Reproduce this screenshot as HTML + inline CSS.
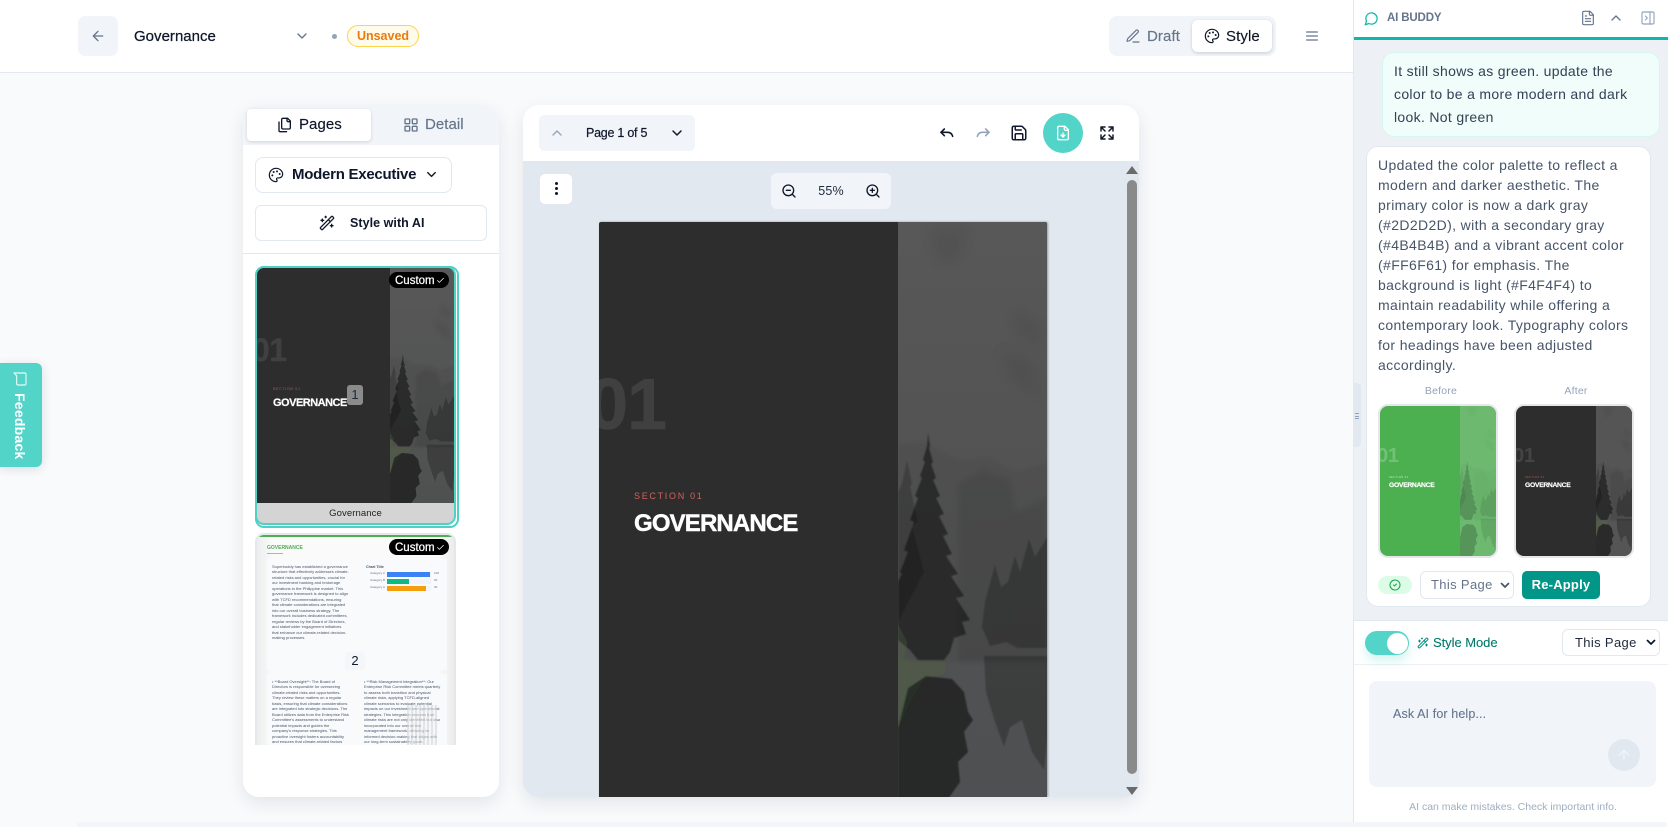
<!DOCTYPE html>
<html lang="en"><head><meta charset="utf-8"><title>Governance</title>
<style>
*{box-sizing:border-box;margin:0;padding:0}
html,body{width:1668px;height:827px;overflow:hidden;background:#f8fafc;font-family:"Liberation Sans",sans-serif;color:#0f172a}
.a{position:absolute;white-space:nowrap}
svg.i{position:absolute;fill:none;stroke:currentColor;stroke-width:2;stroke-linecap:round;stroke-linejoin:round;display:block}
.lines{white-space:nowrap}
.tiny{font-size:4px;line-height:5.47px;color:#475569;white-space:normal;overflow:hidden}
</style></head><body>
<svg width="0" height="0" style="position:absolute">
<defs>
<filter id="b8" x="-30%" y="-30%" width="160%" height="160%"><feGaussianBlur stdDeviation="7"/></filter>
<filter id="b3" x="-10%" y="-10%" width="120%" height="120%"><feGaussianBlur stdDeviation="2.5"/></filter>
<filter id="b1" x="-10%" y="-10%" width="120%" height="120%"><feGaussianBlur stdDeviation=".7"/></filter>
<symbol id="forest" viewBox="0 0 150 577" preserveAspectRatio="none">
<g filter="url(#b8)" fill="#000" style="opacity:calc(var(--o,1)*.06)"><path d="M30 5h40l-8 30-20 8ZM115 85l30 22-3 18-22-12ZM100 125l35 16 8 36-28-18Z"/></g>
<g filter="url(#b3)" fill="#000">
<path style="opacity:calc(var(--o,1)*.05)" d="M0 222 25 220 60 238 90 236 118 250 150 240V440H0Z"/>
<path style="opacity:calc(var(--o,1)*.07)" d="M60 262 85 248 112 258 118 290 150 275V440H60Z"/>
</g>
<g filter="url(#b1)">
<path fill="#000" style="opacity:calc(var(--o,1)*.24)" d="M97 343 103 365 110 360 117 334 122 350 131 317 137 335 150 314V426H120L108 420 92 424 84 405 87 380Z"/>
<path fill="#000" style="opacity:calc(var(--o,1)*.24)" d="M86 434H150V510L146 548 134 530 124 498 112 505 106 525 97 500 88 470Z"/>
<path fill="#000" style="opacity:calc(var(--o,1)*.2)" d="M9 238 14 262 12 264 20 300 14 304 26 350 0 400 0 270 4 262Z"/>
<path fill="#000" style="opacity:calc(var(--o,1)*.46)" d="M30 211 32 224 31 226 35 240 33 242 38 256 35 258 42 274 38 276 46 292 41 294 50 312 45 314 54 332 48 334 60 352 53 354 66 374 58 376 72 398 64 400 68 412 56 416 52 430 46 438 20 438 12 428 2 420 0 418 0 360 4 352 2 350 10 330 6 328 16 300 12 298 20 276 17 274 24 256 22 254 27 240 25 238 29 224Z"/>
<path fill="#4f6a3c" style="opacity:var(--g,.3)" d="M0 403 9 420 6 436 22 440 48 440 46 452 26 456 12 480 0 506Z"/>
<path fill="#000" style="opacity:calc(var(--o,1)*.5)" d="M10 466 28 454 54 457 66 470 70 490 75 498 66 510 70 530 60 540 62 560 50 577H0V506Z"/>
</g>
</symbol>
</defs></svg>

<!-- header -->
<div class="a" style="left:0;top:0;width:1353px;height:73px;background:#fff;border-bottom:1px solid #e2e8f0"></div>
<div class="a" style="left:78px;top:16px;width:40px;height:40px;background:#f1f5f9;border-radius:7px"></div>
<svg class="i" style="left:90px;top:28px;color:#64748b" width="16" height="16" viewBox="0 0 24 24"><path d="M19 12H5M12 19l-7-7 7-7"/></svg>
<div class="a" style="left:134px;top:26px;font-size:15px;line-height:21px;font-weight:500;letter-spacing:.02px;-webkit-text-stroke:.25px #0f172a">Governance</div>
<svg class="i" style="left:294px;top:28px;color:#64748b" width="16" height="16" viewBox="0 0 24 24"><path d="m6 9 6 6 6-6"/></svg>
<div class="a" style="left:332px;top:34px;width:5px;height:5px;border-radius:50%;background:#94a3b8"></div>
<div class="a" style="left:347px;top:25px;width:72px;height:22px;border:1px solid #fcd34d;background:#fffbeb;border-radius:11px;text-align:center;font-size:12.5px;line-height:20px;font-weight:700;color:#ea7a0c">Unsaved</div>

<div class="a" style="left:1109px;top:16px;width:167px;height:40px;background:#f1f5f9;border-radius:8px"></div>
<div class="a" style="left:1192px;top:20px;width:80px;height:32px;background:#fff;border-radius:6px;box-shadow:0 1px 3px rgba(15,23,42,.18)"></div>
<svg class="i" style="left:1125px;top:28px;color:#64748b;stroke-width:1.7" width="16" height="16" viewBox="0 0 24 24"><path d="M12 21h9"/><path d="M16.376 3.622a1 1 0 0 1 3.002 3.002L7.368 18.635a2 2 0 0 1-.855.506l-2.872.838a.5.5 0 0 1-.62-.62l.838-2.872a2 2 0 0 1 .506-.854z"/></svg>
<div class="a" style="left:1147px;top:26px;font-size:15px;line-height:21px;color:#64748b;letter-spacing:.1px;-webkit-text-stroke:.15px #64748b">Draft</div>
<svg class="i" style="left:1204px;top:28px;color:#0f172a;stroke-width:1.8" width="16" height="16" viewBox="0 0 24 24"><circle cx="13.5" cy="6.5" r=".6" fill="currentColor"/><circle cx="17.5" cy="10.5" r=".6" fill="currentColor"/><circle cx="8.5" cy="7.5" r=".6" fill="currentColor"/><circle cx="6.5" cy="12.5" r=".6" fill="currentColor"/><path d="M12 2C6.5 2 2 6.5 2 12s4.5 10 10 10c.926 0 1.648-.746 1.648-1.688 0-.437-.18-.835-.437-1.125-.29-.289-.438-.652-.438-1.125a1.64 1.64 0 0 1 1.668-1.668h1.996c3.051 0 5.555-2.503 5.555-5.554C21.965 6.012 17.461 2 12 2z"/></svg>
<div class="a" style="left:1226px;top:26px;font-size:15px;line-height:21px;letter-spacing:.1px;-webkit-text-stroke:.15px #0f172a">Style</div>
<svg class="i" style="left:1304px;top:28px;color:#64748b" width="16" height="16" viewBox="0 0 24 24"><path d="M4 6h16M4 12h16M4 18h16"/></svg>

<!-- bottom strip -->
<div class="a" style="left:77px;top:822px;width:1589px;height:5px;background:#f3f5f9"></div>

<!-- feedback -->
<div class="a" style="left:0;top:363px;width:42px;height:104px;background:#53d4c9;border-radius:0 6px 6px 0;box-shadow:0 2px 10px rgba(15,23,42,.12)"></div>
<svg class="i" style="left:12px;top:371px;color:#e6faf7;stroke-width:1.7;transform:rotate(90deg)" width="16" height="16" viewBox="0 0 24 24"><path d="M21 15a2 2 0 0 1-2 2H7l-4 4V5a2 2 0 0 1 2-2h14a2 2 0 0 1 2 2z"/></svg>
<div class="a" style="left:11px;top:393px;color:#fff;font-size:14px;font-weight:700;line-height:18px;writing-mode:vertical-rl;letter-spacing:.25px">Feedback</div>

<!-- left panel -->
<div class="a" style="left:243px;top:105px;width:256px;height:692px;background:#fff;border-radius:16px;box-shadow:0 6px 18px rgba(15,23,42,.09);overflow:hidden">
  <div class="a" style="left:0;top:0;width:256px;height:40px;background:#f1f5f9"></div>
</div>
<div class="a" style="left:247px;top:109px;width:124px;height:32px;background:#fff;border-radius:4px;box-shadow:0 1px 3px rgba(15,23,42,.15)"></div>
<svg class="i" style="left:277px;top:117px;stroke-width:2" width="16" height="16" viewBox="0 0 24 24"><path d="M20 7h-3a2 2 0 0 1-2-2V2"/><path d="M9 18a2 2 0 0 1-2-2V4a2 2 0 0 1 2-2h7l4 4v10a2 2 0 0 1-2 2Z"/><path d="M3 7.6v12.8A1.6 1.6 0 0 0 4.6 22h9.8"/></svg>
<div class="a" style="left:299px;top:115px;font-size:15px;line-height:20px;letter-spacing:.05px;-webkit-text-stroke:.15px #0f172a">Pages</div>
<svg class="i" style="left:403px;top:117px;color:#64748b" width="16" height="16" viewBox="0 0 24 24"><rect x="3" y="3" width="7" height="7" rx="1"/><rect x="14" y="3" width="7" height="7" rx="1"/><rect x="14" y="14" width="7" height="7" rx="1"/><rect x="3" y="14" width="7" height="7" rx="1"/></svg>
<div class="a" style="left:425px;top:115px;font-size:15px;line-height:20px;color:#64748b;letter-spacing:.05px;-webkit-text-stroke:.15px #64748b">Detail</div>

<div class="a" style="left:255px;top:157px;width:197px;height:36px;border:1px solid #e2e8f0;border-radius:8px;background:#fff"></div>
<svg class="i" style="left:268px;top:167px;stroke-width:1.8" width="16" height="16" viewBox="0 0 24 24"><circle cx="13.5" cy="6.5" r=".6" fill="currentColor"/><circle cx="17.5" cy="10.5" r=".6" fill="currentColor"/><circle cx="8.5" cy="7.5" r=".6" fill="currentColor"/><circle cx="6.5" cy="12.5" r=".6" fill="currentColor"/><path d="M12 2C6.5 2 2 6.5 2 12s4.5 10 10 10c.926 0 1.648-.746 1.648-1.688 0-.437-.18-.835-.437-1.125-.29-.289-.438-.652-.438-1.125a1.64 1.64 0 0 1 1.668-1.668h1.996c3.051 0 5.555-2.503 5.555-5.554C21.965 6.012 17.461 2 12 2z"/></svg>
<div class="a" style="left:292px;top:165px;font-size:15px;line-height:20px;font-weight:700;letter-spacing:-.26px">Modern Executive</div>
<svg class="i" style="left:424px;top:167px;stroke-width:2.2" width="15" height="15" viewBox="0 0 24 24"><path d="m6 9 6 6 6-6"/></svg>

<div class="a" style="left:255px;top:205px;width:232px;height:36px;border:1px solid #e2e8f0;border-radius:6px;background:#fff"></div>
<svg class="i" style="left:319px;top:215px" width="16" height="16" viewBox="0 0 24 24"><path d="m21.64 3.64-1.28-1.28a1.21 1.21 0 0 0-1.72 0L2.36 18.64a1.21 1.21 0 0 0 0 1.72l1.28 1.28a1.2 1.2 0 0 0 1.72 0L21.64 5.36a1.2 1.2 0 0 0 0-1.72"/><path d="m14 7 3 3M5 6v4M19 14v4M10 2v2M7 8H3M21 16h-4M11 3H9"/></svg>
<div class="a" style="left:350px;top:214px;font-size:12.5px;line-height:18px;font-weight:700;letter-spacing:.05px">Style with AI</div>
<div class="a" style="left:243px;top:253px;width:256px;height:1px;background:#e2e8f0"></div>

<!-- thumb 1 -->
<div class="a" style="left:255px;top:266px;width:204px;height:262px;border:2px solid #4fd1c5;border-radius:9px"></div>
<div class="a" style="left:255px;top:266px;width:201px;height:259px;border:2px solid #4fd1c5;border-radius:9px;background:#d4d4d4;overflow:hidden">
  <div class="a" style="left:0;top:0;width:197px;height:235px;background:#2d2d2d;overflow:hidden">
    <div class="a" style="left:133px;top:0;width:64px;height:235px;background:linear-gradient(#585858,#4f5050)"><svg width="64" height="235" style="display:block"><use href="#forest" width="64" height="235"/></svg></div>
    <div class="a" style="left:-5px;top:65px;font-size:32px;line-height:34px;font-weight:700;color:#404040;letter-spacing:-.5px;-webkit-text-stroke:.4px #404040">01</div>
    <div class="a" style="left:16px;top:119px;font-size:3.4px;line-height:5px;color:#c55a50;letter-spacing:.8px">SECTION 01</div>
    <div class="a" style="left:16px;top:128px;font-size:11px;line-height:14px;font-weight:700;color:#fff;letter-spacing:-.5px;-webkit-text-stroke:.2px #fff">GOVERNANCE</div>
  </div>
  <div class="a" style="left:0;top:235px;width:197px;height:20px;text-align:center;font-size:9.5px;line-height:21px;color:#222;letter-spacing:.1px">Governance</div>
</div>
<div class="a" style="left:347px;top:385px;width:16px;height:20px;background:#8b8b8b;border-radius:3px;text-align:center;font-size:13px;line-height:20px;color:#1e293b">1</div>
<div class="a" style="left:389px;top:272px;width:60px;height:16px;background:#000;border-radius:8px;color:#fff;font-size:11.5px;line-height:18px;padding-left:6px;font-weight:500;-webkit-text-stroke:.25px #fff">Custom</div>
<svg class="i" style="left:436px;top:276px;color:#fff;stroke-width:2" width="9" height="9" viewBox="0 0 24 24"><path d="M20 6 9 17l-5-5"/></svg>

<!-- thumb 2 -->
<div class="a" style="left:255px;top:533px;width:201px;height:212px;border:2px solid #e5e7eb;border-bottom:0;border-radius:9px 9px 0 0;background:linear-gradient(90deg,#eceded,#fafafa 8%,#fafafa 92%,#ececec);overflow:hidden">
  <div class="a" style="left:0;top:0;width:197px;height:2px;background:#4caf50"></div>
  <div class="a" style="left:10px;top:10px;font-size:5px;line-height:7px;font-weight:700;color:#4caf50">GOVERNANCE</div>
  <div class="a" style="left:10px;top:18px;width:16px;height:1px;background:#86d18a"></div>
  <div class="a tiny" style="left:10px;top:24px;width:87px;height:111px;background:#f8fafc;border-radius:2px;padding:5px 5px">Superbuddy has established a governance structure that effectively addresses climate-related risks and opportunities, crucial for our investment banking and brokerage operations in the Philippine market. This governance framework is designed to align with TCFD recommendations, ensuring that climate considerations are integrated into our overall business strategy. The framework includes dedicated committees, regular reviews by the Board of Directors, and stakeholder engagement initiatives that enhance our climate-related decision-making processes.</div>
  <div class="a" style="left:102px;top:24px;width:88px;height:111px;background:#f8fafc;border-radius:2px">
    <div class="a" style="left:7px;top:6px;font-size:3.6px;line-height:5px;font-weight:700;color:#475569">Chart Title</div>
    <div class="a" style="left:11px;top:12px;font-size:3px;line-height:5px;color:#64748b">Category A</div>
    <div class="a" style="left:11px;top:19px;font-size:3px;line-height:5px;color:#64748b">Category B</div>
    <div class="a" style="left:11px;top:26px;font-size:3px;line-height:5px;color:#64748b">Category C</div>
    <div class="a" style="left:28px;top:12.500px;width:44px;height:5px;background:#f1f5f9"></div>
    <div class="a" style="left:28px;top:19.500px;width:44px;height:5px;background:#f1f5f9"></div>
    <div class="a" style="left:28px;top:26.500px;width:44px;height:5px;background:#f1f5f9"></div>
    <div class="a" style="left:28px;top:12.500px;width:43px;height:5px;background:#3b82f6"></div>
    <div class="a" style="left:28px;top:19.500px;width:22px;height:5px;background:#10b981"></div>
    <div class="a" style="left:28px;top:26.500px;width:39px;height:5px;background:#f59e0b"></div>
    <div class="a" style="left:75px;top:12px;font-size:3px;line-height:5px;color:#64748b">100</div>
    <div class="a" style="left:75px;top:19px;font-size:3px;line-height:5px;color:#64748b">50</div>
    <div class="a" style="left:75px;top:26px;font-size:3px;line-height:5px;color:#64748b">90</div>
  </div>
  <div class="a tiny" style="left:10px;top:139px;width:87px;height:80px;background:#f8fafc;border-radius:2px;padding:5px 5px">• **Board Oversight**: The Board of Directors is responsible for overseeing climate-related risks and opportunities. They review these matters on a regular basis, ensuring that climate considerations are integrated into strategic decisions. The Board utilizes data from the Enterprise Risk Committee's assessments to understand potential impacts and guides the company's response strategies. This proactive oversight fosters accountability and ensures that climate-related factors are considered in all major business initiatives.</div>
  <div class="a tiny" style="left:102px;top:139px;width:88px;height:80px;background:#f8fafc;border-radius:2px;padding:5px 5px">• **Risk Management Integration**: Our Enterprise Risk Committee meets quarterly to assess both transition and physical climate risks, applying TCFD-aligned climate scenarios to evaluate potential impacts on our investment and operational strategies. This integration ensures that climate risks are not only identified but also incorporated into our overall risk management framework, allowing for informed decision-making that aligns with our long-term sustainability goals.</div>
  <div class="a" style="left:150px;top:170px;width:30px;height:42px;opacity:.55;background:repeating-linear-gradient(90deg,#cfd3d3 0 2px,#f2f3f3 2px 4px)"></div>
</div>
<div class="a" style="left:345px;top:652px;width:20px;height:18px;background:#f4f6f9;border-radius:3px;text-align:center;font-size:13px;line-height:18px;color:#0f172a">2</div>
<div class="a" style="left:389px;top:539px;width:60px;height:16px;background:#000;border-radius:8px;color:#fff;font-size:11.5px;line-height:18px;padding-left:6px;font-weight:500;-webkit-text-stroke:.25px #fff">Custom</div>
<svg class="i" style="left:436px;top:543px;color:#fff;stroke-width:2" width="9" height="9" viewBox="0 0 24 24"><path d="M20 6 9 17l-5-5"/></svg>

<!-- doc panel -->
<div class="a" style="left:523px;top:105px;width:616px;height:692px;background:#e2e8f0;border-radius:16px;box-shadow:0 6px 18px rgba(15,23,42,.09);overflow:hidden">
  <div class="a" style="left:0;top:0;width:616px;height:56px;background:#fff"></div>
  <!-- page -->
  <div class="a" style="left:76px;top:117px;width:448px;height:575px;background:#2d2d2d;box-shadow:1px 0 2px rgba(0,0,0,.35);overflow:hidden;border-radius:2px 2px 0 0">
    <div class="a" style="left:299px;top:0;width:150px;height:577px;background:linear-gradient(#585858 0,#535353 42%,#4e5051 100%)"><svg width="150" height="577" style="display:block"><use href="#forest" width="150" height="577"/></svg></div>
    <div class="a" style="left:-11px;top:143px;font-size:72px;line-height:80px;font-weight:700;color:#404040;letter-spacing:-1px;-webkit-text-stroke:.6px #404040">01</div>
    <div class="a" style="left:35px;top:268px;font-size:9px;line-height:12px;color:#d5605a;letter-spacing:1.7px">SECTION 01</div>
    <div class="a" style="left:35px;top:287px;font-size:24px;line-height:30px;font-weight:700;color:#fff;letter-spacing:-.85px;-webkit-text-stroke:.4px #fff">GOVERNANCE</div>
  </div>
</div>
<div class="a" style="left:539px;top:115px;width:156px;height:36px;background:#f1f5f9;border-radius:6px"></div>
<svg class="i" style="left:549px;top:125px;color:#94a3b8" width="16" height="16" viewBox="0 0 24 24"><path d="m18 15-6-6-6 6"/></svg>
<div class="a" style="left:586px;top:124px;font-size:12.5px;line-height:18px;font-weight:500;letter-spacing:-.25px;-webkit-text-stroke:.2px #0f172a">Page 1 of 5</div>
<svg class="i" style="left:669px;top:125px;stroke-width:2.2" width="16" height="16" viewBox="0 0 24 24"><path d="m6 9 6 6 6-6"/></svg>
<svg class="i" style="left:939px;top:125px;stroke-width:2.4" width="16" height="16" viewBox="0 0 24 24"><path d="M8 6 3 11l5 5"/><path d="M3 11h10c4 0 6.500 2.500 7.500 6"/></svg>
<svg class="i" style="left:975px;top:125px;color:#94a3b8;stroke-width:2.4" width="16" height="16" viewBox="0 0 24 24"><path d="m16 6 5 5-5 5"/><path d="M21 11H11c-4 0-6.500 2.500-7.500 6"/></svg>
<svg class="i" style="left:1010px;top:124px" width="18" height="18" viewBox="0 0 24 24"><path d="M15.2 3a2 2 0 0 1 1.4.6l3.8 3.8a2 2 0 0 1 .6 1.4V19a2 2 0 0 1-2 2H5a2 2 0 0 1-2-2V5a2 2 0 0 1 2-2z"/><path d="M17 21v-7a1 1 0 0 0-1-1H8a1 1 0 0 0-1 1v7"/><path d="M7 3v4a1 1 0 0 0 1 1h7"/></svg>
<div class="a" style="left:1043px;top:113px;width:40px;height:40px;border-radius:50%;background:#53d4c9"></div>
<svg class="i" style="left:1055px;top:125px;color:#fff" width="16" height="16" viewBox="0 0 24 24"><path d="M15 2H6a2 2 0 0 0-2 2v16a2 2 0 0 0 2 2h12a2 2 0 0 0 2-2V7Z"/><path d="M14 2v4a2 2 0 0 0 2 2h4"/><path d="M12 18v-6"/><path d="m9 15 3 3 3-3"/></svg>
<svg class="i" style="left:1099px;top:125px;stroke-width:2.200" width="16" height="16" viewBox="0 0 24 24"><path d="M3 9V3h6M3 3l6 6M21 9V3h-6M21 3l-6 6M3 15v6h6M3 21l6-6M21 15v6h-6M21 21l-6-6"/></svg>

<div class="a" style="left:540px;top:174px;width:32px;height:30px;background:#fff;border-radius:5px"></div>
<div class="a" style="left:554.500px;top:182px;width:3px;height:3px;border-radius:50%;background:#0f172a;box-shadow:0 5px 0 #0f172a,0 10px 0 #0f172a"></div>
<div class="a" style="left:771px;top:173px;width:120px;height:36px;background:#f1f5f9;border-radius:6px"></div>
<svg class="i" style="left:781px;top:183px" width="16" height="16" viewBox="0 0 24 24"><circle cx="11" cy="11" r="8"/><path d="m21 21-4.300-4.300M8 11h6"/></svg>
<div class="a" style="left:771px;top:182px;width:120px;text-align:center;font-size:12.5px;line-height:18px;color:#1e293b;letter-spacing:.2px">55%</div>
<svg class="i" style="left:865px;top:183px" width="16" height="16" viewBox="0 0 24 24"><circle cx="11" cy="11" r="8"/><path d="m21 21-4.300-4.300M8 11h6M11 8v6"/></svg>

<!-- scrollbar -->
<div class="a" style="left:1126px;top:166px;width:0;height:0;border-left:6px solid transparent;border-right:6px solid transparent;border-bottom:8px solid #6b6b6b"></div>
<div class="a" style="left:1127px;top:180px;width:10px;height:594px;background:#8a8a8a;border-radius:5px"></div>
<div class="a" style="left:1126px;top:787px;width:0;height:0;border-left:6px solid transparent;border-right:6px solid transparent;border-top:8px solid #6b6b6b"></div>

<!-- right panel -->
<div class="a" style="left:1353px;top:0;width:315px;height:822px;background:#fff;border-left:1px solid #e2e8f0"></div>
<div class="a" style="left:1354px;top:40px;width:314px;height:580px;background:#edf1f5"></div>
<div class="a" style="left:1354px;top:37px;width:314px;height:3px;background:#0db8a8"></div>
<svg class="i" style="left:1364px;top:11px;color:#0db8a8" width="15" height="15" viewBox="0 0 24 24"><path d="M7.900 20A9 9 0 1 0 4 16.100L2 22Z"/></svg>
<div class="a" style="left:1387px;top:11px;font-size:11.5px;line-height:15px;font-weight:700;color:#64748b;letter-spacing:-.15px">AI BUDDY</div>
<svg class="i" style="left:1580px;top:10px;color:#64748b;stroke-width:1.700" width="16" height="16" viewBox="0 0 24 24"><path d="M15 2H6a2 2 0 0 0-2 2v16a2 2 0 0 0 2 2h12a2 2 0 0 0 2-2V7Z"/><path d="M14 2v4a2 2 0 0 0 2 2h4M16 13H8M16 17H8M10 9H8"/></svg>
<svg class="i" style="left:1608px;top:10px;color:#64748b" width="16" height="16" viewBox="0 0 24 24"><path d="m18 15-6-6-6 6"/></svg>
<svg class="i" style="left:1640px;top:10px;color:#94a3b8;stroke-width:1.700" width="16" height="16" viewBox="0 0 24 24"><rect x="3" y="3" width="18" height="18" rx="2"/><path d="M15 3v18M8 9l3 3-3 3"/></svg>

<div class="a" style="left:1382px;top:52px;width:278px;height:85px;background:#f0fdfa;border:1px solid #d5f7f0;border-radius:12px"></div>
<div class="a lines" style="left:1394px;top:60px;font-size:14px;line-height:23px;color:#334155;letter-spacing:.32px">It still shows as green. update the<br>color to be a more modern and dark<br>look. Not green</div>

<div class="a" style="left:1366px;top:146px;width:285px;height:461px;background:#fff;border:1px solid #e2e8f0;border-radius:12px"></div>
<div class="a lines" style="left:1378px;top:155px;font-size:14px;line-height:20px;color:#475569;letter-spacing:.37px">Updated the color palette to reflect a<br>modern and darker aesthetic. The<br>primary color is now a dark gray<br>(#2D2D2D), with a secondary gray<br>(#4B4B4B) and a vibrant accent color<br>(#FF6F61) for emphasis. The<br>background is light (#F4F4F4) to<br>maintain readability while offering a<br>contemporary look. Typography colors<br>for headings have been adjusted<br>accordingly.</div>

<div class="a" style="left:1378px;top:384px;width:120px;text-align:center;font-size:10.500px;line-height:14px;color:#94a3b8;padding-left:6px;letter-spacing:.2px">Before</div>
<div class="a" style="left:1514px;top:384px;width:120px;text-align:center;font-size:10.500px;line-height:14px;color:#94a3b8;padding-left:4px;letter-spacing:.2px">After</div>

<div class="a" style="left:1378px;top:404px;width:120px;height:154px;border:2px solid #e5e7eb;border-radius:10px;background:#4caf50;overflow:hidden;--o:.4;--g:0">
  <div class="a" style="left:80px;top:0;width:36px;height:150px;background:#6cb96f"><svg width="36" height="150" style="display:block"><use href="#forest" width="36" height="150"/></svg></div>
  <div class="a" style="left:-3px;top:39px;font-size:20px;line-height:22px;font-weight:700;color:#72c275;letter-spacing:-.3px">01</div>
  <div class="a" style="left:9px;top:70px;font-size:2.500px;line-height:4px;color:#c8e8ca;letter-spacing:.5px">SECTION 01</div>
  <div class="a" style="left:9px;top:75px;font-size:6.800px;line-height:9px;font-weight:700;color:#fff;letter-spacing:-.33px;-webkit-text-stroke:.15px #fff">GOVERNANCE</div>
</div>
<div class="a" style="left:1514px;top:404px;width:120px;height:154px;border:2px solid #e5e7eb;border-radius:10px;background:#2d2d2d;overflow:hidden">
  <div class="a" style="left:80px;top:0;width:36px;height:150px;background:#555"><svg width="36" height="150" style="display:block"><use href="#forest" width="36" height="150"/></svg></div>
  <div class="a" style="left:-3px;top:39px;font-size:20px;line-height:22px;font-weight:700;color:#444;letter-spacing:-.3px">01</div>
  <div class="a" style="left:9px;top:70px;font-size:2.500px;line-height:4px;color:#c55a50;letter-spacing:.5px">SECTION 01</div>
  <div class="a" style="left:9px;top:75px;font-size:6.800px;line-height:9px;font-weight:700;color:#fff;letter-spacing:-.33px;-webkit-text-stroke:.15px #fff">GOVERNANCE</div>
</div>

<div class="a" style="left:1378px;top:576px;width:34px;height:18px;background:#dcfce7;border-radius:9px"></div>
<svg class="i" style="left:1389px;top:579px;color:#16a34a" width="12" height="12" viewBox="0 0 24 24"><circle cx="12" cy="12" r="10"/><path d="m9 12 2 2 4-4"/></svg>
<div class="a" style="left:1420px;top:571px;width:94px;height:28px;background:#fff;border:1px solid #e2e8f0;border-radius:6px"></div>
<div class="a" style="left:1431px;top:576px;font-size:13px;line-height:18px;color:#64748b;letter-spacing:.35px">This Page</div>
<svg class="i" style="left:1499px;top:579px;color:#475569;stroke-width:3.500" width="12" height="12" viewBox="0 0 24 24"><path d="m5 9 7 7 7-7"/></svg>
<div class="a" style="left:1522px;top:571px;width:78px;height:28px;background:#009688;border-radius:5px;color:#fff;text-align:center;font-size:13px;line-height:28px;font-weight:700;letter-spacing:.2px">Re-Apply</div>

<!-- style mode row -->
<div class="a" style="left:1354px;top:620px;width:314px;height:45px;background:#fff;border-top:1px solid #e2e8f0;border-bottom:1px solid #edf1f5"></div>
<div class="a" style="left:1365px;top:631px;width:44px;height:24px;border-radius:12px;background:#53d4c9;box-shadow:0 6px 10px rgba(83,212,201,.25)"></div>
<div class="a" style="left:1387px;top:632.500px;width:21px;height:21px;border-radius:50%;background:#fff"></div>
<svg class="i" style="left:1417px;top:637px;color:#00897b" width="12" height="12" viewBox="0 0 24 24"><path d="m21.640 3.640-1.280-1.280a1.210 1.210 0 0 0-1.720 0L2.360 18.640a1.210 1.210 0 0 0 0 1.720l1.280 1.280a1.200 1.200 0 0 0 1.720 0L21.640 5.360a1.200 1.200 0 0 0 0-1.720"/><path d="m14 7 3 3M5 6v4M19 14v4M10 2v2M7 8H3M21 16h-4M11 3H9"/></svg>
<div class="a" style="left:1433px;top:634px;font-size:13px;line-height:18px;color:#00796b;letter-spacing:-.05px;-webkit-text-stroke:.1px #00796b">Style Mode</div>
<div class="a" style="left:1562px;top:629px;width:98px;height:27px;background:#fff;border:1px solid #e2e8f0;border-radius:6px"></div>
<div class="a" style="left:1575px;top:634px;font-size:13px;line-height:18px;color:#1e293b;letter-spacing:.35px">This Page</div>
<svg class="i" style="left:1645px;top:636px;color:#0f172a;stroke-width:3.500" width="12" height="12" viewBox="0 0 24 24"><path d="m5 9 7 7 7-7"/></svg>

<!-- input -->
<div class="a" style="left:1369px;top:681px;width:287px;height:106px;background:#f1f5f9;border-radius:8px"></div>
<div class="a" style="left:1393px;top:705px;font-size:12.500px;line-height:18px;color:#64748b;letter-spacing:.12px;-webkit-text-stroke:.1px #64748b">Ask AI for help...</div>
<div class="a" style="left:1608px;top:739px;width:32px;height:32px;border-radius:50%;background:#e2e8f0"></div>
<svg class="i" style="left:1616px;top:747px;color:#f1f5f9" width="16" height="16" viewBox="0 0 24 24"><path d="m5 12 7-7 7 7M12 19V5"/></svg>
<div class="a" style="left:1353px;top:799px;width:320px;text-align:center;font-size:10.500px;line-height:16px;color:#a0aec0;letter-spacing:0">AI can make mistakes. Check important info.</div>

<!-- resize handle -->
<div class="a" style="left:1354px;top:383px;width:7px;height:64px;background:#e2e8f0;border-radius:0 4px 4px 0"></div>
<div class="a" style="left:1355px;top:413px;width:4px;height:6px;border-top:1px solid #94a3b8;border-bottom:1px solid #94a3b8"></div>
<div class="a" style="left:1355px;top:415.500px;width:4px;height:1px;background:#94a3b8"></div>
</body></html>
